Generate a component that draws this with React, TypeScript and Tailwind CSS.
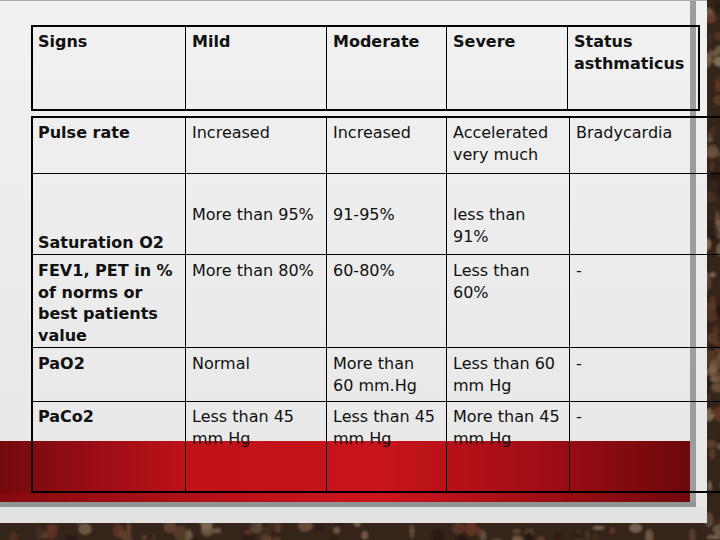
import React from "react";

// deterministic blobs for the stone texture behind the slide
const blobs = (() => {
  let s = 11;
  const rnd = () => {
    s = (s * 16807) % 2147483647;
    return s / 2147483647;
  };
  const out: { x: number; y: number; rx: number; ry: number; c: string; o: number }[] = [];
  const colors = ["#5a3f2c", "#6b4a34", "#241610", "#7e654e", "#4a3222", "#6a3a28", "#a89478"];
  for (let i = 0; i < 150; i++) {
    const onRight = i % 2 === 0;
    const c = colors[Math.floor(rnd() * colors.length)];
    out.push({
      x: onRight ? 704 + rnd() * 18 : rnd() * 720,
      y: onRight ? rnd() * 540 : 520 + rnd() * 22,
      rx: 2 + rnd() * 5,
      ry: 2 + rnd() * 6,
      c,
      o: c === "#a89478" ? 0.35 + rnd() * 0.3 : 0.5 + rnd() * 0.4,
    });
  }
  return out;
})();

const header = ["Signs", "Mild", "Moderate", "Severe", "Status asthmaticus"];

type Row = { h: string; cells: string[][]; pad: string };

const rows: Row[] = [
  { h: "h-[56px] border-b", pad: "pt-[4px]", cells: [["Pulse rate"], ["Increased"], ["Increased"], ["Accelerated", "very much"], ["Bradycardia"]] },
  { h: "h-[81px] border-b", pad: "pt-[30px]", cells: [["Saturation O2"], ["More than 95%"], ["91-95%"], ["less than", "91%"], []] },
  { h: "h-[93px] border-b", pad: "pt-[5px]", cells: [["FEV1, PET in %", "of norms or", "best patients", "value"], ["More than 80%"], ["60-80%"], ["Less than", "60%"], ["-"]] },
  { h: "h-[54px] border-b", pad: "pt-[5px]", cells: [["PaO2"], ["Normal"], ["More than", "60 mm.Hg"], ["Less than 60", "mm Hg"], ["-"]] },
  { h: "h-[89px]", pad: "pt-[4px]", cells: [["PaCo2"], ["Less than 45", "mm Hg"], ["Less than 45", "mm Hg"], ["More than 45", "mm Hg"], ["-"]] },
];

export default function App() {
  return (
    <div className="grid w-[720px] h-[540px] overflow-hidden bg-[#35241a] font-['DejaVu_Sans',sans-serif] text-[#111]">
      <svg className="col-start-1 row-start-1" width="720" height="540">
        <defs>
          <filter id="soft">
            <feGaussianBlur stdDeviation="1.2" />
          </filter>
        </defs>
        <g filter="url(#soft)">
          {blobs.map((p, i) => (
            <ellipse key={i} cx={p.x} cy={p.y} rx={p.rx} ry={p.ry} fill={p.c} opacity={p.o} />
          ))}
        </g>
      </svg>

      {/* slide backdrop */}
      <div className="col-start-1 row-start-1 w-[707px] h-[523px] flex flex-col bg-[linear-gradient(180deg,#f1f1f1,#e7e7e7)] border-t border-[#a9a9a9]">
        <div className="flex h-[501px]">
          <div className="w-[690px] flex flex-col justify-end">
            <div className="h-[61px] flex flex-col justify-end bg-[linear-gradient(90deg,#740a0e_0%,#900c13_10%,#c01219_28%,#c8141b_55%,#a50e15_76%,#6c080c_100%)]">
              <div className="h-[9px] bg-[linear-gradient(90deg,#8a0a10,#d0141c_55%,#72080c)] opacity-70" />
            </div>
          </div>
          <div className="w-[6px] bg-[#9c9c9c]" />
        </div>
        <div className="w-[696px] h-[5px] bg-[#8e9696]" />
        <div className="flex-1 bg-[#e2e2e2]" />
      </div>

      {/* table, laid over the slide */}
      <div className="col-start-1 row-start-1 pt-[25px] pl-[31px] text-[16px] leading-[21.5px]">
        <div className="grid grid-cols-[152px_141px_120px_121px_131px] w-[669px] h-[86px] border-2 border-black font-bold">
          {header.map((t, i) => (
            <div key={t} className={`${i ? "border-l border-black pl-[6px]" : "pl-[5px]"} pt-[4px] pr-1`}>
              {t}
            </div>
          ))}
        </div>

        <div className="mt-[5px] w-[760px] border-l-2 border-t-2 border-b-2 border-black">
          {rows.map((r, ri) => (
            <div key={ri} className={`grid grid-cols-[152px_141px_120px_123px_1fr] ${r.h} border-black`}>
              {r.cells.map((lines, ci) => (
                <div
                  key={ci}
                  className={`${ci ? "border-l border-black pl-[6px]" : "pl-[5px] font-bold"} ${
                    ci === 0 && ri === 1 ? "flex flex-col justify-end pb-[1px]" : r.pad
                  }`}
                >
                  {lines.map((l) => (
                    <div key={l} className="whitespace-nowrap">
                      {l}
                    </div>
                  ))}
                </div>
              ))}
            </div>
          ))}
        </div>
      </div>
    </div>
  );
}
